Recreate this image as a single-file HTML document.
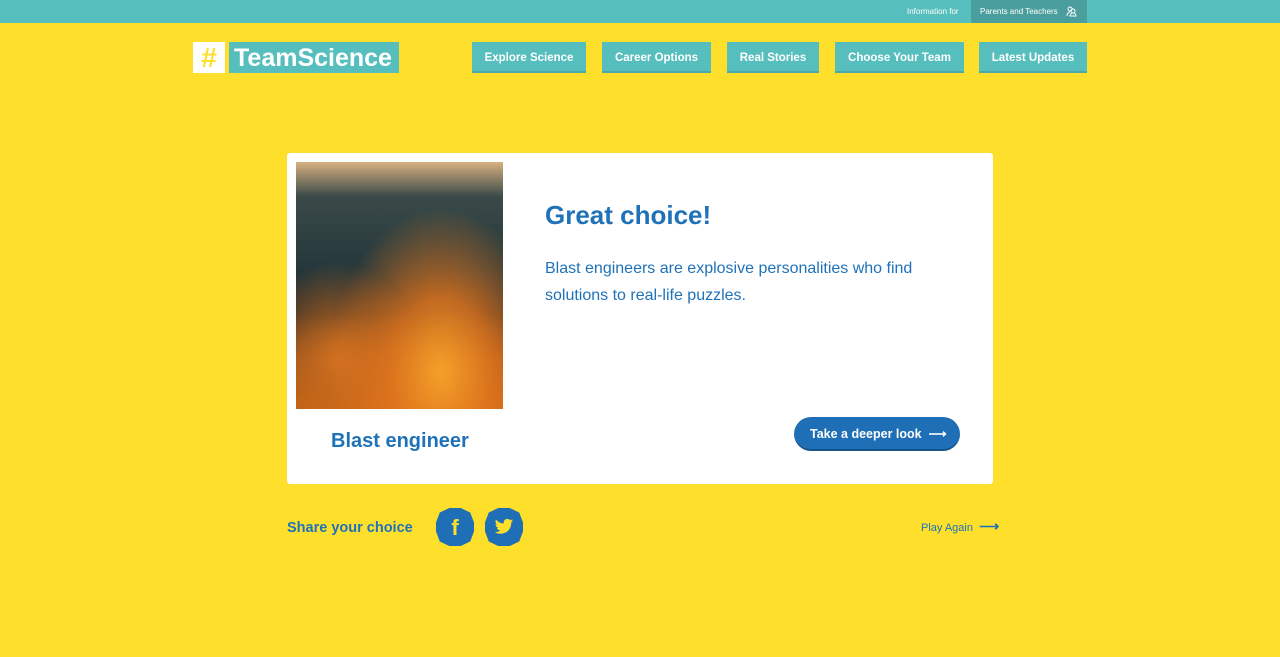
<!DOCTYPE html>
<html><head><style>
*{margin:0;padding:0;box-sizing:border-box}
body{width:1280px;height:657px;background:#fddf2c;font-family:"Liberation Sans",sans-serif;position:relative;overflow:hidden}
.top{height:23px;background:#56bebd;position:relative}
.top .info{position:absolute;left:907px;top:7px;font-size:8px;color:#fff}
.top .pt{position:absolute;left:971px;top:0;width:116px;height:23px;background:#4a9e9d;color:#fff;font-size:8px;padding:7px 0 0 9px}
.top svg{position:absolute;left:95px;top:6px}
.logo{position:absolute;top:42px;left:193px;height:31px;display:flex}
.logo .h{width:32px;height:31px;background:#fff;color:#fddf2c;font-weight:bold;font-size:28px;text-align:center;line-height:32px}
.logo .t{margin-left:4px;background:#56bebd;color:#fff;font-weight:bold;font-size:25px;line-height:32px;padding:0 5px;width:170px}
.nav a{position:absolute;top:42px;height:31px;background:#56bebd;color:#fff;font-weight:bold;font-size:11.5px;line-height:32px;text-align:center;border-bottom:2px solid #4aa9a8}
.card{position:absolute;left:287px;top:153px;width:706px;height:331px;background:#fff;border-radius:3px}
.img{position:absolute;left:9px;top:9px;width:207px;height:247px;background:radial-gradient(ellipse at 70% 85%,#f5a02a 0%,rgba(230,120,30,.8) 25%,rgba(0,0,0,0) 55%),radial-gradient(ellipse at 20% 80%,#d07020 0%,rgba(0,0,0,0) 35%),linear-gradient(180deg,#d8b080 0%,#3a4a48 14%,#24363a 45%,#2a2a28 62%,#8a4a1a 80%,#c06010 100%)}
.title{position:absolute;left:258px;top:47px;font-size:26px;font-weight:bold;color:#1f72b8}
.desc{position:absolute;left:258px;top:102px;font-size:16px;line-height:27px;color:#1f72b8;width:400px}
.role{position:absolute;left:44px;top:277px;font-size:20px;font-weight:bold;color:#1f72b8}
.btn{position:absolute;left:507px;top:264px;width:166px;height:34px;border-radius:17px;background:#1f6fb6;color:#fff;font-weight:bold;font-size:12.5px;line-height:34px;padding-left:16px;border-bottom:2px solid #17548a}
.share{position:absolute;left:287px;top:520px;font-size:14.5px;font-weight:bold;color:#1f72b8}
.oct{position:absolute;top:508px;width:38px;height:38px;background:#1f6fb6;clip-path:polygon(35% 0,65% 0,90% 12%,100% 38%,100% 62%,90% 88%,65% 100%,35% 100%,10% 88%,0 62%,0 38%,10% 12%);color:#fddf2c;font-weight:bold;text-align:center;line-height:40px;font-size:22px}
.oct svg{position:absolute;left:9px;top:10px}
.play{position:absolute;left:921px;top:518px;font-size:11px;color:#1f72b8}
</style></head><body>
<div class="top"><span class="info">Information for</span><div class="pt">Parents and Teachers
<svg width="11" height="11" viewBox="0 0 11 11" fill="none" stroke="#fff" stroke-width="1"><circle cx="4" cy="3" r="2"/><circle cx="7" cy="5" r="2"/><path d="M1 10c0-3 2-4 3-4M4 10c0-2 1.5-3 3-3s3 1 3 3z"/></svg></div></div>
<div class="logo"><div class="h">#</div><div class="t">TeamScience</div></div>
<div class="nav">
<a style="left:472px;width:114px">Explore Science</a>
<a style="left:602px;width:109px">Career Options</a>
<a style="left:727px;width:92px">Real Stories</a>
<a style="left:835px;width:129px">Choose Your Team</a>
<a style="left:979px;width:108px">Latest Updates</a>
</div>
<div class="card">
<div class="img"></div>
<div class="title">Great choice!</div>
<div class="desc">Blast engineers are explosive personalities who find solutions to real-life puzzles.</div>
<div class="role">Blast engineer</div>
<div class="btn">Take a deeper look &nbsp;⟶</div>
</div>
<div class="share">Share your choice</div>
<div class="oct" style="left:436px">f</div>
<div class="oct" style="left:485px"><svg width="20" height="18" viewBox="0 0 24 20"><path fill="#fddf2c" d="M23 2.5c-.8.4-1.7.6-2.6.7.9-.6 1.6-1.4 2-2.5-.9.5-1.900.9-2.9 1.1C18.6.9 17.4.3 16.1.3c-2.5 0-4.5 2-4.5 4.5 0 .4 0 .7.1 1C7.900 5.6 4.600 3.800 2.400 1.100c-.4.7-.6 1.4-.6 2.3 0 1.6.8 2.9 2 3.7-.7 0-1.4-.2-2-.6v.1c0 2.2 1.6 4 3.6 4.4-.4.1-.8.2-1.2.2-.3 0-.6 0-.8-.1.6 1.8 2.2 3.1 4.2 3.1-1.5 1.2-3.5 1.9-5.6 1.9H1c2 1.3 4.4 2 6.9 2 8.3 0 12.8-6.9 12.8-12.8v-.6c.9-.6 1.7-1.4 2.3-2.2z"/></svg></div>
<div class="play">Play Again &nbsp;<b style="font-size:14px">⟶</b></div>
</body></html>
